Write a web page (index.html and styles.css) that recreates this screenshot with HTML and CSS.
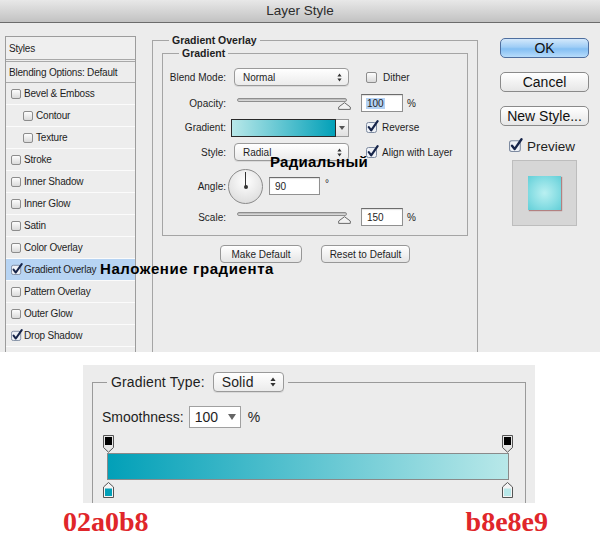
FILE: index.html
```html
<!DOCTYPE html>
<html>
<head>
<meta charset="utf-8">
<title>Layer Style</title>
<link rel="stylesheet" href="styles.css">
</head>
<body>
<div class="dialog">
  <div class="titlebar">Layer Style</div>
  <div class="content">
    <div class="stylelist">
      <div class="row head">Styles</div>
      <div class="row blend">Blending Options: Default</div>
      <div class="row"><span class="cb"></span>Bevel &amp; Emboss</div>
      <div class="row sub"><span class="cb"></span>Contour</div>
      <div class="row sub"><span class="cb"></span>Texture</div>
      <div class="row"><span class="cb"></span>Stroke</div>
      <div class="row"><span class="cb"></span>Inner Shadow</div>
      <div class="row"><span class="cb"></span>Inner Glow</div>
      <div class="row"><span class="cb"></span>Satin</div>
      <div class="row"><span class="cb"></span>Color Overlay</div>
      <div class="row sel"><svg class="cbx" width="12" height="12" viewBox="0 0 13 13"><rect x="0.5" y="2.5" width="10" height="10" rx="2" fill="#eef1f6" stroke="#7d8aa0"/><path d="M2.8 7.2L5.2 10.3L11.6 1.2" fill="none" stroke="#17254a" stroke-width="2.2" stroke-linecap="round" stroke-linejoin="round"/></svg>Gradient Overlay</div>
      <div class="row"><span class="cb"></span>Pattern Overlay</div>
      <div class="row"><span class="cb"></span>Outer Glow</div>
      <div class="row"><svg class="cbx" width="12" height="12" viewBox="0 0 13 13"><rect x="0.5" y="2.5" width="10" height="10" rx="2" fill="#eef1f6" stroke="#7d8aa0"/><path d="M2.8 7.2L5.2 10.3L11.6 1.2" fill="none" stroke="#17254a" stroke-width="2.2" stroke-linecap="round" stroke-linejoin="round"/></svg>Drop Shadow</div>
      <div class="row"></div>
    </div>

    <fieldset class="overlay">
      <legend>Gradient Overlay</legend>
      <fieldset class="grad">
        <legend>Gradient</legend>
        <div class="fgrid">
          <div class="lbl">Blend Mode:</div>
          <div class="select"><span>Normal</span><svg width="5" height="9" viewBox="0 0 5 9"><path d="M2.5 0.5L4.6 3.6H0.4Z M2.5 8.5L0.4 5.4H4.6Z" fill="#333"/></svg></div>
          <div class="c3 chk"><span class="cb big"></span>Dither</div>

          <div class="lbl">Opacity:</div>
          <div class="slider"><span class="track"></span><svg class="thumb" width="13" height="8" viewBox="0 0 13 8"><path d="M6.5 0.7L12.3 5V7.4H0.7V5Z" fill="#f2f2f2" stroke="#6a6a6a"/></svg></div>
          <div class="c3 num"><span class="field"><span class="hl">100</span></span><span class="unit">%</span></div>

          <div class="lbl">Gradient:</div>
          <div class="swatch"><span class="ramp"></span><span class="drop"><svg width="6" height="4" viewBox="0 0 6 4"><path d="M0 0H6L3 4Z" fill="#555"/></svg></span></div>
          <div class="c3 chk"><svg class="cbx" width="13" height="13" viewBox="0 0 13 13"><rect x="0.5" y="2.5" width="10" height="10" rx="2" fill="#eef1f6" stroke="#7d8aa0"/><path d="M2.8 7.2L5.2 10.3L11.6 1.2" fill="none" stroke="#17254a" stroke-width="2.2" stroke-linecap="round" stroke-linejoin="round"/></svg>Reverse</div>

          <div class="lbl">Style:</div>
          <div class="select"><span>Radial</span><svg width="5" height="9" viewBox="0 0 5 9"><path d="M2.5 0.5L4.6 3.6H0.4Z M2.5 8.5L0.4 5.4H4.6Z" fill="#333"/></svg></div>
          <div class="c3 chk"><svg class="cbx" width="13" height="13" viewBox="0 0 13 13"><rect x="0.5" y="2.5" width="10" height="10" rx="2" fill="#eef1f6" stroke="#7d8aa0"/><path d="M2.8 7.2L5.2 10.3L11.6 1.2" fill="none" stroke="#17254a" stroke-width="2.2" stroke-linecap="round" stroke-linejoin="round"/></svg>Align with Layer</div>

          <div class="lbl">Angle:</div>
          <div class="angle"><span class="dial"></span><span class="field wide">90</span><span class="deg">°</span></div>
          <div class="c3"></div>

          <div class="lbl">Scale:</div>
          <div class="slider"><span class="track"></span><svg class="thumb" width="13" height="8" viewBox="0 0 13 8"><path d="M6.5 0.7L12.3 5V7.4H0.7V5Z" fill="#f2f2f2" stroke="#6a6a6a"/></svg></div>
          <div class="c3 num"><span class="field">150</span><span class="unit">%</span></div>
        </div>
      </fieldset>
      <div class="btns">
        <button class="sbtn w82">Make Default</button>
        <button class="sbtn w89">Reset to Default</button>
      </div>
    </fieldset>

    <div class="actions">
      <button class="abtn ok">OK</button>
      <button class="abtn">Cancel</button>
      <button class="abtn last">New Style...</button>
      <div class="prevrow"><svg class="cbx" width="14" height="14" viewBox="0 0 13 13"><rect x="0.5" y="2.5" width="10" height="10" rx="2" fill="#eef1f6" stroke="#7d8aa0"/><path d="M2.8 7.2L5.2 10.3L11.6 1.2" fill="none" stroke="#17254a" stroke-width="2.2" stroke-linecap="round" stroke-linejoin="round"/></svg>Preview</div>
      <div class="preview"><span class="psq"></span></div>
    </div>
  </div>
  <div class="note n-radial">Радиальный</div>
  <div class="note n-overlay">Наложение градиента</div>
</div>

<div class="editor">
  <div class="panel">
    <fieldset class="gt">
      <legend><span class="lg">Gradient Type: <span class="select2"><span>Solid</span><svg width="6" height="10" viewBox="0 0 6 10"><path d="M3 0.5L5.6 4H0.4Z M3 9.5L0.4 6H5.6Z" fill="#333"/></svg></span></span></legend>
      <div class="smooth">Smoothness: <span class="sfield"><span>100</span><svg width="8" height="6" viewBox="0 0 8 6"><path d="M0 0H8L4 6Z" fill="#666"/></svg></span><span class="pct">%</span></div>
      <div class="rampbox">
        <svg class="stop top l" width="11" height="18" viewBox="0 0 11 18"><path d="M0.5 0.5H10.5V12.5L5.5 17.2L0.5 12.5Z" fill="#e6e6e6" stroke="#555"/><rect x="2" y="2" width="7" height="8" fill="#000"/></svg>
        <svg class="stop top r" width="11" height="18" viewBox="0 0 11 18"><path d="M0.5 0.5H10.5V12.5L5.5 17.2L0.5 12.5Z" fill="#e6e6e6" stroke="#555"/><rect x="2" y="2" width="7" height="8" fill="#000"/></svg>
        <div class="bar"></div>
        <svg class="stop bot l" width="11" height="16" viewBox="0 0 11 16"><path d="M0.5 5L5.5 0.5L10.5 5V15.5H0.5Z" fill="#f4f4f4" stroke="#555"/><rect x="2" y="6.5" width="7" height="7.5" fill="#02a0b8"/></svg>
        <svg class="stop bot r" width="11" height="16" viewBox="0 0 11 16"><path d="M0.5 5L5.5 0.5L10.5 5V15.5H0.5Z" fill="#f4f4f4" stroke="#555"/><rect x="2" y="6.5" width="7" height="7.5" fill="#b8e8e9"/></svg>
      </div>
    </fieldset>
  </div>
  <div class="codes"><span>02a0b8</span><span>b8e8e9</span></div>
</div>
</body>
</html>
```
FILE: styles.css
```css
* { box-sizing: border-box; }

body {
  margin: 0;
  width: 600px;
  height: 548px;
  overflow: hidden;
  background: #fff;
  font-family: "Liberation Sans", Arial, sans-serif;
  font-size: 10px;
  color: #1e1e1e;
}

.dialog {
  position: relative;
  height: 352px;
  background: #ececec;
  overflow: hidden;
}

.titlebar {
  height: 23px;
  border-bottom: 1px solid #6c6c6c;
  background: linear-gradient(#e8e8e8, #c2c2c2);
  text-align: center;
  font-size: 13.5px;
  line-height: 22px;
  color: #2c2c2c;
}

.content {
  display: flex;
  align-items: flex-start;
  padding: 13px 0 0 5px;
}

/* ---------- style list ---------- */
.stylelist {
  width: 131px;
  height: 330px;
  border: 1px solid #9c9c9c;
  border-bottom: none;
  background: #ededed;
  overflow: hidden;
  letter-spacing: -0.2px;
}

.row {
  height: 22px;
  display: flex;
  align-items: center;
  padding-left: 5px;
  border-bottom: 1px solid #fbfbfb;
  white-space: nowrap;
}

.row.head {
  height: 23px;
  padding-left: 3px;
  border-bottom: 1px solid #a8a8a8;
  margin-bottom: 1px;
  background: #efefef;
}

.row.blend {
  height: 22px;
  padding-left: 3px;
  border-top: 1px solid #a8a8a8;
  border-bottom: 1px solid #a8a8a8;
}

.row.sub { padding-left: 17px; }
.row.sel { background: #b7d4f3; }

.cb {
  display: inline-block;
  width: 10px;
  height: 10px;
  border: 1px solid #8c8c8c;
  border-radius: 2px;
  background: linear-gradient(#fdfdfd, #dadada);
  margin-right: 3px;
  flex: none;
}

.cb.big { width: 11px; height: 11px; margin-right: 6px; }

.cbx { flex: none; margin-right: 1px; margin-top: -2px; }

/* ---------- fieldsets ---------- */
fieldset {
  margin: 0;
  padding: 0;
  border: 1px solid #a5a5a5;
  min-width: 0;
}

legend {
  margin-left: 16px;
  padding: 0 3px;
  font-size: 10.5px;
  font-weight: bold;
  line-height: 12px;
}

.overlay {
  width: 326px;
  height: 330px;
  margin: -2px 0 0 16px;
  border-bottom: none;
}

.grad {
  margin: 1px 9px 0;
  padding: 5px 0 8px;
}

.fgrid {
  display: grid;
  grid-template-columns: 63px 118px 1fr;
  grid-template-rows: 26px 26px 23px 26px 42px 20px;
  column-gap: 5px;
  align-items: center;
}

.lbl { text-align: right; white-space: nowrap; }

.c3 { padding-left: 7px; white-space: nowrap; }

.chk { display: flex; align-items: center; padding-left: 12px; }
.chk .cbx { margin-right: 3px; }

.select {
  margin-left: 3px;
  width: 115px;
  height: 18px;
  border: 1px solid #9a9a9a;
  border-radius: 4px;
  background: linear-gradient(#ffffff, #ebebeb);
  box-shadow: 0 1px 0 rgba(0, 0, 0, 0.08);
  display: flex;
  align-items: center;
  justify-content: space-between;
  padding: 0 6px 0 8px;
}

.slider {
  position: relative;
  margin-left: 6px;
  width: 115px;
  height: 13px;
}

.track {
  display: block;
  margin-top: 1px;
  width: 110px;
  height: 4px;
  border-radius: 2px;
  border: 1px solid #8e8e8e;
  background: linear-gradient(#b4b4b4, #e2e2e2);
}

.thumb {
  position: absolute;
  left: 101px;
  top: 5px;
}

.num { display: flex; align-items: center; }

.field {
  display: flex;
  align-items: center;
  width: 42px;
  height: 18px;
  border: 1px solid #909090;
  border-top-color: #6c6c6c;
  background: #fff;
  padding-left: 5px;
  box-shadow: inset 0 1px 1px rgba(0, 0, 0, 0.12);
}

.field.wide { width: 51px; margin-left: 6px; }

.hl { background: #b4d2f4; padding: 0 1px; margin-left: -1px; }

.unit { margin-left: 4px; }
.deg { margin-left: 5px; margin-top: -6px; }

.swatch {
  display: flex;
  width: 118px;
  height: 18px;
}

.ramp {
  width: 105px;
  border: 1px solid #2a2a2a;
  background: linear-gradient(to right, #b8e8e9, #02a0b8);
}

.drop {
  width: 13px;
  border: 1px solid #9b9b9b;
  border-left: none;
  background: linear-gradient(#fafafa, #e0e0e0);
  display: flex;
  align-items: center;
  justify-content: center;
}

.angle { display: flex; align-items: center; }

.dial {
  position: relative;
  flex: none;
  margin-left: -3px;
  width: 35px;
  height: 35px;
  border-radius: 50%;
  border: 1px solid #8a8a8a;
  background: radial-gradient(circle at 50% 35%, #ffffff, #e2e2e2 70%, #d4d4d4);
}

.dial::before {
  content: "";
  position: absolute;
  left: 16px;
  top: 2px;
  width: 1px;
  height: 15px;
  background: #333;
}

.dial::after {
  content: "";
  position: absolute;
  left: 14.5px;
  top: 15px;
  width: 4px;
  height: 4px;
  border-radius: 50%;
  background: #333;
}

.btns {
  display: flex;
  justify-content: center;
  gap: 19px;
  margin-top: 9px;
}

.sbtn {
  height: 18px;
  padding: 0;
  border: 1px solid #979797;
  border-radius: 4px;
  background: linear-gradient(#ffffff, #e5e5e5);
  font-family: "Liberation Sans", Arial, sans-serif;
  font-size: 10px;
  color: #1e1e1e;
}

.w82 { width: 82px; }
.w89 { width: 89px; }

/* ---------- action column ---------- */
.actions {
  width: 89px;
  margin: 2px 0 0 22px;
  display: flex;
  flex-direction: column;
}

.abtn {
  height: 20px;
  margin-bottom: 14px;
  padding: 0;
  border: 1px solid #8a8a8a;
  border-radius: 5px;
  background: linear-gradient(#ffffff, #e6e6e6);
  font-family: "Liberation Sans", Arial, sans-serif;
  font-size: 14px;
  color: #111;
}

.abtn.ok {
  border-color: #4f6f9f;
  background: linear-gradient(#d3e8fb, #9fcdf6 45%, #84bff3 55%, #b7dcfb);
}

.abtn.last { margin-bottom: 12px; }

.prevrow {
  display: flex;
  align-items: center;
  height: 16px;
  padding-left: 9px;
  font-size: 13.5px;
}

.prevrow .cbx { margin-right: 4px; }

.preview {
  margin: 6px 0 0 12px;
  width: 65px;
  height: 66px;
  border: 1px solid #bdbdbd;
  background: #d6d6d6;
  display: flex;
  align-items: center;
  justify-content: center;
}

.psq {
  width: 33px;
  height: 34px;
  background: radial-gradient(circle at 50% 50%, #b9f0f1, #86dde3 60%, #62cfd8);
  box-shadow: 1px 1px 1px rgba(150, 60, 60, 0.55);
}

/* ---------- annotations ---------- */
.note {
  position: absolute;
  font-size: 15px;
  line-height: 15px;
  font-weight: bold;
  color: #000;
  white-space: nowrap;
}

.n-radial { left: 270px; top: 154px; letter-spacing: 0.3px; }
.n-overlay { left: 100px; top: 261px; letter-spacing: 0.6px; }

/* ---------- gradient editor ---------- */
.editor { padding-top: 13px; }

.panel {
  margin-left: 83px;
  width: 452px;
  height: 138px;
  padding-top: 7px;
  background: #ececec;
  overflow: hidden;
}

.gt {
  margin: 0 9px;
  height: 150px;
  padding: 0 0 0 9px;
  border-color: #9a9a9a;
}

.gt legend {
  margin-left: 5px;
  padding: 0 4px;
  font-size: 14px;
  font-weight: normal;
  line-height: 20px;
}

.lg { display: inline-flex; align-items: center; gap: 8px; letter-spacing: 0.15px; }

.select2 {
  display: inline-flex;
  align-items: center;
  justify-content: space-between;
  width: 71px;
  height: 20px;
  padding: 0 7px 0 8px;
  border: 1px solid #9a9a9a;
  border-radius: 4px;
  background: linear-gradient(#ffffff, #ebebeb);
  box-shadow: 0 1px 0 rgba(0, 0, 0, 0.08);
}

.smooth {
  display: flex;
  align-items: center;
  height: 22px;
  margin-top: 14px;
  font-size: 14px;
}

.sfield {
  display: flex;
  align-items: center;
  justify-content: space-between;
  width: 52px;
  height: 22px;
  margin-left: 5px;
  padding: 0 4px 0 5px;
  border: 1px solid #a0a0a0;
  background: #fff;
}

.pct { margin-left: 7px; }

.rampbox {
  position: relative;
  margin-top: 7px;
  width: 413px;
  height: 62px;
  padding-top: 18px;
}

.bar {
  margin-left: 5px;
  width: 402px;
  height: 27px;
  border: 1px solid #8a8a8a;
  background: linear-gradient(to right, #02a0b8, #b8e8e9);
}

.stop { position: absolute; }
.stop.top { top: 0; }
.stop.bot { top: 47px; }
.stop.l { left: 1px; }
.stop.r { left: 400px; }

.codes {
  display: flex;
  justify-content: space-between;
  margin-top: 3px;
  padding: 0 52px 0 63px;
  font-family: "Liberation Serif", "Times New Roman", serif;
  font-size: 28px;
  font-weight: bold;
  line-height: 32px;
  color: #e0262a;
}
```
